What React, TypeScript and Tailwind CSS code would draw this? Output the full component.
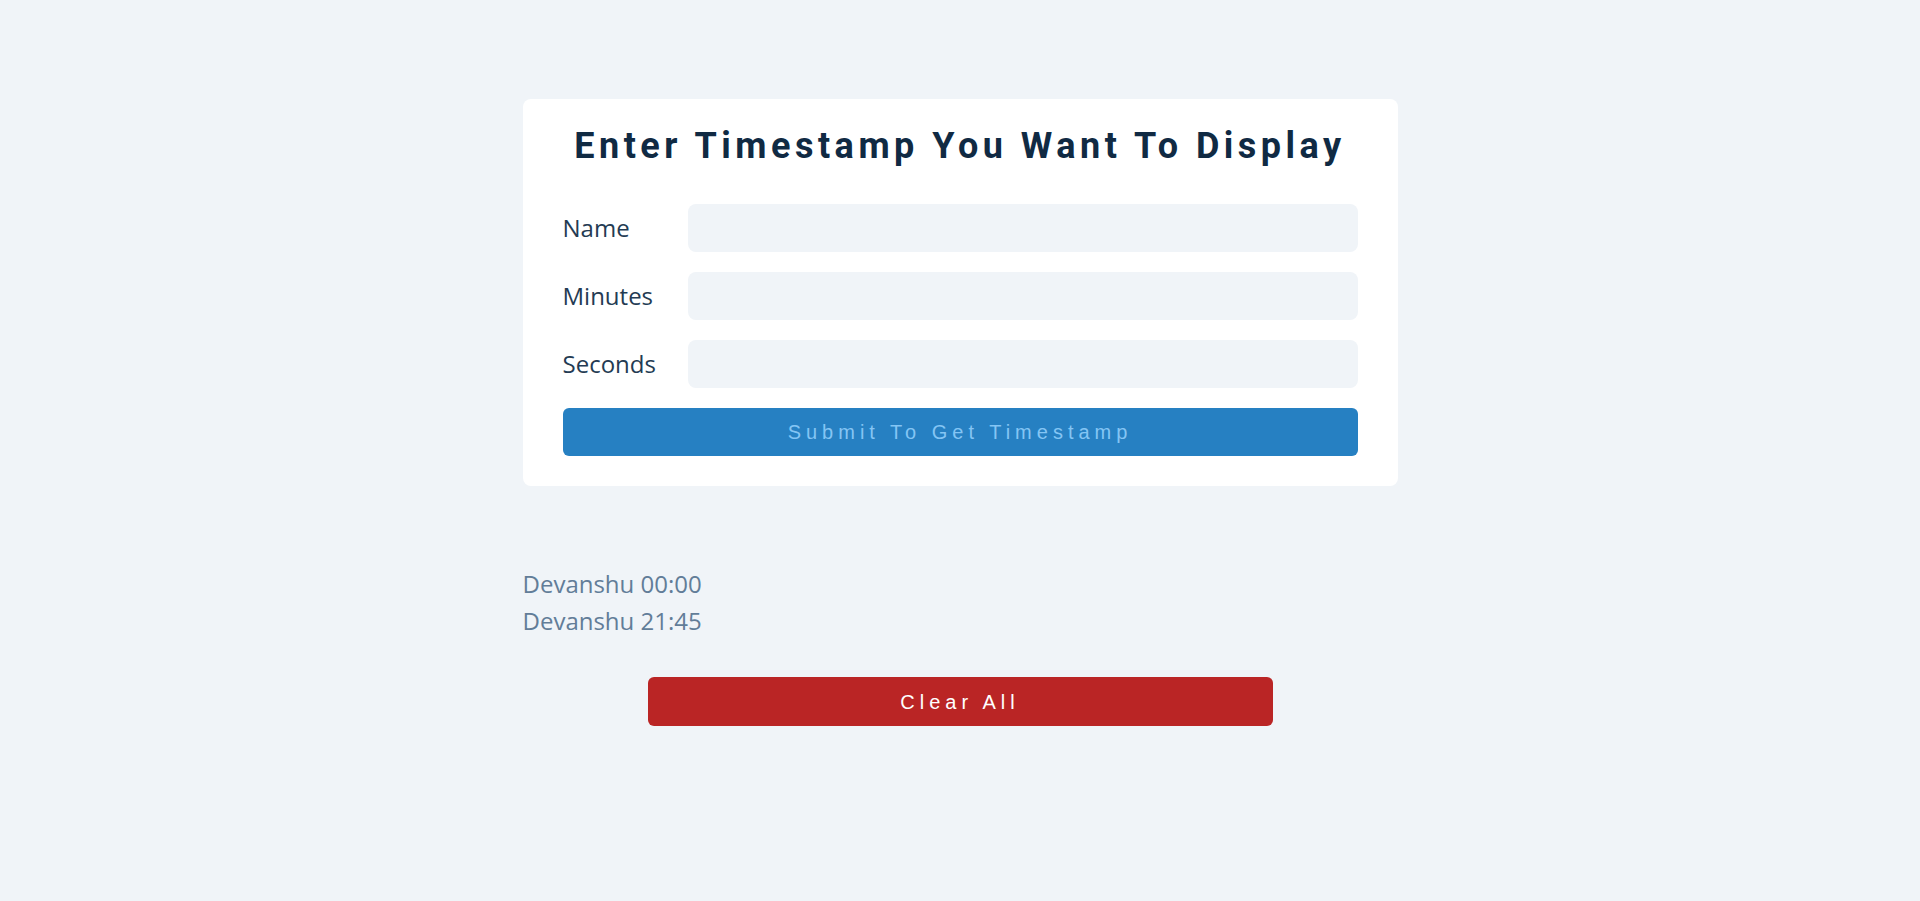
import { useState } from "react"

interface Stamp {
    name: string
    time: string
}

const fields = ["Name", "Minutes", "Seconds"]

export default function App() {
    const [stamps, setStamps] = useState<Stamp[]>([
        { name: "Devanshu", time: "00:00" },
        { name: "Devanshu", time: "21:45" },
    ])

    return (
        <div className="min-h-screen bg-[#f0f4f8] font-['Open_Sans',sans-serif]">
            <div className="w-[875px] mx-auto pt-[99px]">
                {/* form card */}
                <form
                    className="bg-white rounded-lg px-10 pt-[26px] pb-[30px]"
                    onSubmit={(e) => e.preventDefault()}
                >
                    <h1 className="text-center text-[36px] leading-[42px] font-bold tracking-[4.5px] text-[#102a43] font-['Roboto',sans-serif]">
                        Enter Timestamp You Want To Display
                    </h1>
                    <div className="mt-[37px] flex flex-col gap-5">
                        {fields.map((label) => (
                            <div key={label} className="flex items-center">
                                <label className="w-[125px] shrink-0 text-[24px] text-[#243b53]">
                                    {label}
                                </label>
                                <input
                                    type="text"
                                    className="flex-1 h-12 rounded-lg bg-[#f0f4f8] px-4 outline-none text-[#243b53]"
                                />
                            </div>
                        ))}
                    </div>
                    <button
                        type="submit"
                        className="mt-5 w-full h-12 rounded-md bg-[#2680c2] text-[#84c5f4] text-[20px] tracking-[5px] font-['Liberation_Sans',Arial,sans-serif]"
                    >
                        Submit To Get Timestamp
                    </button>
                </form>

                {/* saved stamps */}
                <div className="mt-[79px] text-[24px] leading-[37px] text-[#627d98]">
                    {stamps.map((s, idx) => (
                        <p key={idx}>
                            {s.name} {s.time}
                        </p>
                    ))}
                </div>

                <div className="mt-[38px] flex justify-center">
                    <button
                        type="button"
                        onClick={() => setStamps([])}
                        className="w-[625px] h-[49px] rounded-md bg-[#ba2525] text-white text-[20px] tracking-[5px] font-['Liberation_Sans',Arial,sans-serif]"
                    >
                        Clear All
                    </button>
                </div>
            </div>
        </div>
    )
}
